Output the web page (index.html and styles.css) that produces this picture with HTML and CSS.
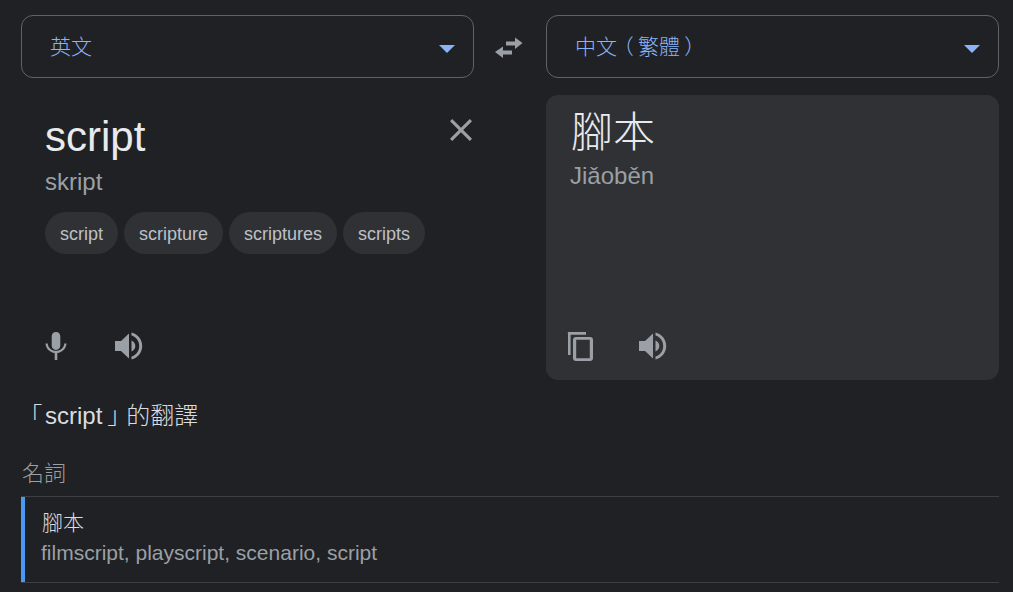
FILE: index.html
```html
<!DOCTYPE html>
<html lang="zh-Hant">
  <head>
    <meta charset="UTF-8" />
    <link rel="stylesheet" href="styles.css">
  </head>
  <body>
    <div class="lang-row">
      <div class="lang-select">
        <span>英文</span>
        <i class="caret"></i>
      </div>
      <div class="swap">
        <svg width="28" height="22" viewBox="0 0 28 22">
          <path class="icon" d="M0 15l8-5.500v4h9v4H8V21z" />
          <path class="icon" d="M27.500 6L20 .5v4h-9v4h9V12z" />
        </svg>
      </div>
      <div class="lang-select">
        <span>中文<b class="punct-open">（</b>繁體<b class="punct-close">）</b></span>
        <i class="caret"></i>
      </div>
    </div>

    <div class="panels">
      <div class="panel source">
        <div class="source-head">
          <div class="word">script</div>
          <svg class="clear" width="24" height="24" viewBox="0 0 24 24">
            <path class="icon" d="M23 3.200L20.800 1 12 9.800 3.200 1 1 3.200 9.800 12 1 20.800 3.200 23 12 14.200 20.800 23 23 20.800 14.200 12z" />
          </svg>
        </div>
        <div class="phonetic">skript</div>
        <div class="chips">
          <span class="chip">script</span>
          <span class="chip">scripture</span>
          <span class="chip">scriptures</span>
          <span class="chip">scripts</span>
        </div>
        <div class="actions">
          <svg class="mic" width="24" height="30" viewBox="0 0 24 30">
            <path class="icon" d="M12 19c2.800 0 4.300-2 4.300-4.400V5.400C16.300 3 14.800 1 12 1S7.700 3 7.700 5.400v9.200C7.700 17 9.200 19 12 19z" />
            <path class="icon" d="M20.300 12.500c-.3 4.500-4 7.300-8.300 7.300s-8-2.800-8.300-7.300H1.500c.3 5.200 4.400 8.900 9.200 9.500V29h2.600v-7c4.800-.6 8.900-4.300 9.200-9.500z" />
          </svg>
          <svg width="30" height="30" viewBox="0 0 30 30">
            <path class="icon" d="M1 10v10h6l8 7.500V2.500L7 10z" />
            <path class="icon" d="M17.500 9.500v11c2.400-1 3.800-3 3.800-5.500s-1.400-4.500-3.800-5.500z" />
            <path class="icon" d="M17.500 1.500v3c4.500 1.200 7.700 5.300 7.700 10.500s-3.200 9.300-7.700 10.500v3c6.200-1.300 10.700-7 10.700-13.500S23.700 2.800 17.500 1.500z" />
          </svg>
        </div>
      </div>

      <div class="panel target">
        <div class="word target-word">腳本</div>
        <div class="phonetic">Jiǎoběn</div>
        <div class="actions">
          <svg width="28" height="30" viewBox="0 0 28 30">
            <path class="icon" d="M2 1h18v2.800H4.600V24H2V3a2 2 0 0 1 0-2z" />
            <path class="icon" fill-rule="evenodd" d="M10 6h14a3 3 0 0 1 3 3v18a3 3 0 0 1-3 3H10a3 3 0 0 1-3-3V9a3 3 0 0 1 3-3zm.2 2.800v18.400h13.600V8.800z" />
          </svg>
          <svg width="30" height="30" viewBox="0 0 30 30">
            <path class="icon" d="M1 10v10h6l8 7.500V2.500L7 10z" />
            <path class="icon" d="M17.500 9.500v11c2.400-1 3.800-3 3.800-5.500s-1.400-4.500-3.800-5.500z" />
            <path class="icon" d="M17.500 1.500v3c4.500 1.200 7.700 5.300 7.700 10.500s-3.200 9.300-7.700 10.500v3c6.200-1.300 10.700-7 10.700-13.500S23.700 2.800 17.500 1.500z" />
          </svg>
        </div>
      </div>
    </div>

    <h3 class="dict-title"><b class="punct-open">「</b>script<b class="punct-close">」</b>的翻譯</h3>
    <div class="pos">名詞</div>
    <div class="entry">
      <div class="entry-word">腳本</div>
      <div class="entry-syn">filmscript, playscript, scenario, script</div>
    </div>
  </body>
</html>
```

FILE: styles.css
```css
:root {
  --bg: #202124;
  --panel: #303134;
  --text: #e8eaed;
  --muted: #9aa0a6;
  --blue: #8ab4f8;
  --line: #3c4043;
}

html, body {
  height: 100%;
  overflow: hidden;
}

body {
  margin: 0;
  padding: 15px 14px 0 21px;
  box-sizing: border-box;
  background-color: var(--bg);
  color: var(--text);
  font-family: "Liberation Sans", "Noto Sans CJK TC", sans-serif;
  font-weight: 300;
  text-spacing-trim: space-all;
}

.icon {
  fill: var(--muted);
}

/* half-width brackets, then margins put them back in the middle of a full cell */
.punct-open,
.punct-close {
  font-weight: inherit;
  font-feature-settings: "halt";
}

.punct-open {
  margin: 0 0.2em 0 0.3em;
}

.punct-close {
  margin: 0 0.3em 0 0.2em;
}

.lang-row {
  display: grid;
  grid-template-columns: 453px 72px 453px;
}

.lang-select {
  height: 63px;
  box-sizing: border-box;
  border: 1px solid #5f6368;
  border-radius: 12px;
  padding: 0 8px 0 28px;
  display: flex;
  align-items: center;
  justify-content: space-between;
  color: var(--blue);
  font-size: 21px;
}

.lang-select span {
  margin-top: -4px;
  white-space: nowrap;
}

.caret {
  width: 0;
  height: 0;
  margin: 4px 10px 0 0;
  border-left: 8px solid transparent;
  border-right: 8px solid transparent;
  border-top: 8px solid var(--blue);
}

.swap {
  display: flex;
  align-items: center;
  justify-content: center;
  padding: 2px 2px 0 0;
}

.panels {
  display: grid;
  grid-template-columns: 453px 453px;
  justify-content: space-between;
  margin-top: 17px;
}

.panel {
  height: 285px;
  box-sizing: border-box;
  display: flex;
  flex-direction: column;
}

.source {
  padding: 16px 0 0 24px;
}

.target {
  padding: 12px 0 0 24px;
  background-color: var(--panel);
  border-radius: 12px;
}

.source-head {
  display: flex;
  justify-content: space-between;
}

.clear {
  margin: 7px 1px 0 0;
}

.word {
  font-size: 42px;
  line-height: 52px;
}

.target-word {
  padding-left: 1px;
}

.phonetic {
  font-size: 24px;
  line-height: 32px;
  color: var(--muted);
}

.source .phonetic {
  margin-top: 3px;
}

.target .phonetic {
  margin-top: 1px;
}

.chips {
  display: flex;
  gap: 6px;
  margin-top: 14px;
}

.chip {
  height: 42px;
  line-height: 44px;
  padding: 0 15px;
  border-radius: 21px;
  background-color: var(--panel);
  color: #bdc1c6;
  font-size: 18px;
}

.actions {
  display: flex;
  align-items: center;
  gap: 46px;
  margin-top: auto;
  padding-bottom: 19px;
}

.mic {
  margin-left: -1px;
}

.target .actions {
  margin-left: -4px;
  gap: 44px;
}

.dict-title {
  margin: 22px 0 0;
  font-size: 24px;
  line-height: 28px;
  font-weight: 300;
  color: #dadce0;
}

.dict-title .punct-open {
  margin: 0 0.1em 0 0.4em;
}

.pos {
  margin-top: 30px;
  padding-left: 1px;
  font-size: 22px;
  line-height: 28px;
  color: var(--muted);
}

.entry {
  margin-top: 8px;
  height: 87px;
  box-sizing: border-box;
  padding: 12px 0 0 20px;
  border-top: 1px solid var(--line);
  border-bottom: 1px solid var(--line);
  position: relative;
}

.entry::before {
  content: "";
  position: absolute;
  left: 0;
  top: 0;
  bottom: 0;
  width: 4px;
  background-color: #4a9af5;
}

.entry-word {
  padding-left: 1px;
  font-size: 21px;
  line-height: 28px;
  color: #dadce0;
}

.entry-syn {
  margin-top: 2px;
  font-size: 21px;
  line-height: 28px;
  color: var(--muted);
}
```
